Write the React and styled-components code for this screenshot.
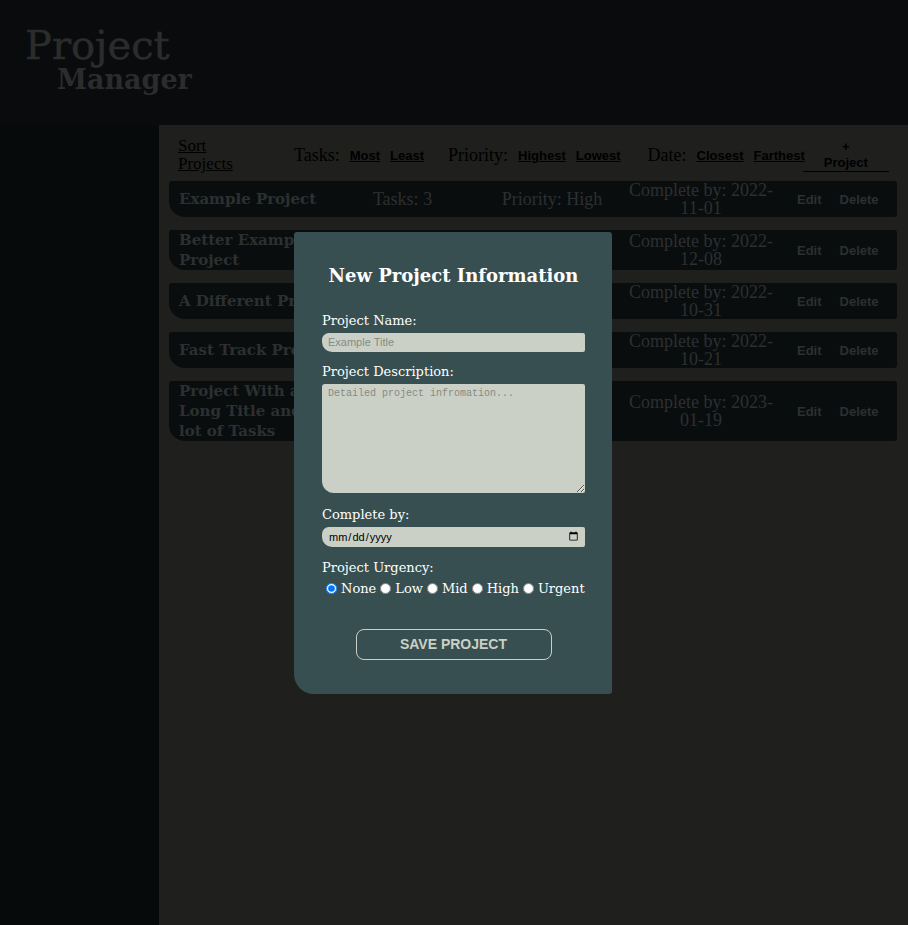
import styled, { createGlobalStyle } from "styled-components";

const GlobalStyle = createGlobalStyle`
  html, body {
    margin: 0;
    padding: 0;
    background: #1f1f1d;
  }
  * {
    box-sizing: border-box;
  }
`;

const Page = styled.div`
  display: flex;
  flex-direction: column;
  min-height: 100vh;
  font-family: "DejaVu Serif", serif;
`;

const Header = styled.header`
  height: 125px;
  background: #0a0b0c;
  padding: 23px 0 0 25px;
  color: #2b2c2c;
`;

const LogoTop = styled.div`
  font-size: 40px;
  line-height: 44px;
  -webkit-text-stroke: 0.5px #2b2c2c;
`;

const LogoBottom = styled.div`
  font-size: 27px;
  font-weight: bold;
  line-height: 26px;
  margin-left: 32px;
`;

const Body = styled.div`
  display: flex;
  flex: 1;
`;

const Sidebar = styled.aside`
  flex: 0 0 159px;
  background: #060a0b;
`;

const Main = styled.main`
  flex: 1;
  min-width: 0;
  background: #1f1f1d;
  padding: 12px 11px 0 10px;
`;

const SortBar = styled.div`
  display: flex;
  align-items: center;
  padding-left: 9px;
  height: 36px;
  margin-bottom: 8px;
  color: #000;
  font-family: "Liberation Serif", serif;
  font-size: 18px;
`;

const SortTitle = styled.div`
  flex: 0 0 116px;
  font-size: 17px;
  line-height: 18px;
  span {
    display: inline-block;
    width: 62px;
    text-decoration: underline;
  }
`;

const SortGroup = styled.div`
  display: flex;
  align-items: center;
  gap: 10px;
  margin-right: ${(p) => p.$gap ?? 26}px;
`;

const SortLink = styled.a`
  font-family: "Liberation Sans", Arial, sans-serif;
  font-weight: bold;
  font-size: 13px;
  color: #000;
  text-decoration: underline;
`;

const AddButton = styled.div`
  flex: 0 0 86px;
  margin-left: -2px;
  border-bottom: 1px solid #000;
  text-align: center;
  font-family: "Liberation Sans", Arial, sans-serif;
  font-weight: bold;
  font-size: 13px;
  line-height: 16px;
`;

const Card = styled.div`
  display: flex;
  align-items: center;
  background: #0a0d0e;
  border-radius: 3px 3px 3px 16px;
  padding-left: 10px;
  margin-bottom: 13px;
  color: #2c3031;
  min-height: 35px;
`;

const CardTitle = styled.div`
  flex: 0 0 160px;
  margin-right: 26px;
  font-weight: bold;
  font-size: 15px;
  line-height: 20px;
`;

const Field = styled.div`
  flex: 0 0 ${(p) => p.$w}px;
  margin-left: ${(p) => p.$ml || 0}px;
  text-align: center;
  font-family: "Liberation Serif", serif;
  font-size: 18px;
  line-height: 18px;
`;

const Action = styled.span`
  margin-left: ${(p) => p.$ml}px;
  font-family: "Liberation Sans", Arial, sans-serif;
  font-weight: bold;
  font-size: 13px;
`;

const Modal = styled.div`
  position: fixed;
  left: calc(50% - 160px);
  top: calc(50% - 231px);
  width: 318px;
  height: 462px;
  background: #384f51;
  border-radius: 3px 3px 3px 20px;
  padding: 31px 27px 0 28px;
  color: #fff;
`;

const ModalTitle = styled.h2`
  margin: 0 0 24px;
  text-align: center;
  font-size: 18px;
  line-height: 26px;
  font-weight: bold;
`;

const Label = styled.label`
  display: block;
  font-size: 13px;
  line-height: 16px;
  margin-bottom: 4px;
`;

const fieldBase = `
  display: block;
  width: 100%;
  border: none;
  background: #cbd0c6;
  font-family: "Liberation Sans", Arial, sans-serif;
  font-size: 11px;
  &::placeholder {
    color: #868a83;
  }
`;

const TextInput = styled.input`
  ${fieldBase}
  height: 19px;
  border-radius: 7px 2px 2px 10px;
  padding: 0 6px;
  margin: 0 0 12px;
`;

const TextArea = styled.textarea`
  ${fieldBase}
  height: 109px;
  border-radius: 3px 2px 2px 12px;
  padding: 4px 6px;
  margin: 0 0 14px;
  font-family: "Liberation Mono", monospace;
  font-size: 10px;
  resize: vertical;
`;

const DateInput = styled.input`
  ${fieldBase}
  height: 20px;
  border-radius: 7px 2px 2px 10px;
  padding: 0 4px 0 6px;
  margin: 0 0 13px;
  color: #000;
`;

const Radios = styled.div`
  display: flex;
  align-items: center;
  font-size: 13px;
  line-height: 18px;
  label {
    display: flex;
    align-items: center;
  }
  input {
    margin: 0 4px 0 4px;
    width: 11px;
    height: 11px;
  }
`;

const SaveButton = styled.button`
  display: block;
  width: 196px;
  height: 31px;
  margin: 31px auto 0;
  background: transparent;
  border: 1px solid #cbd0c6;
  border-radius: 8px;
  color: #cbd0c6;
  font-family: "Liberation Sans", Arial, sans-serif;
  font-weight: bold;
  font-size: 14px;
  text-transform: uppercase;
`;

const projects = [
  { title: "Example Project", tasks: 3, priority: "High", date: "2022-11-01" },
  { title: "Better Example Project", tasks: 5, priority: "Mid", date: "2022-12-08" },
  { title: "A Different Project", tasks: 2, priority: "Low", date: "2022-10-31" },
  { title: "Fast Track Project", tasks: 4, priority: "Urgent", date: "2022-10-21" },
  { title: "Project With a Long Title and a lot of Tasks", tasks: 12, priority: "None", date: "2023-01-19" },
];

const App = () => {
  return (
    <Page>
      <GlobalStyle />
      <Header>
        <LogoTop>Project</LogoTop>
        <LogoBottom>Manager</LogoBottom>
      </Header>
      <Body>
        <Sidebar />
        <Main>
          <SortBar>
            <SortTitle>
              <span>Sort Projects</span>
            </SortTitle>
            <SortGroup $gap={24}>
              Tasks:
              <SortLink>Most</SortLink>
              <SortLink>Least</SortLink>
            </SortGroup>
            <SortGroup $gap={27}>
              Priority:
              <SortLink>Highest</SortLink>
              <SortLink>Lowest</SortLink>
            </SortGroup>
            <SortGroup $gap={0}>
              Date:
              <SortLink>Closest</SortLink>
              <SortLink>Farthest</SortLink>
            </SortGroup>
            <AddButton>
              +<br />
              Project
            </AddButton>
          </SortBar>
          {projects.map((p) => (
            <Card key={p.title}>
              <CardTitle>{p.title}</CardTitle>
              <Field $w={75}>Tasks: {p.tasks}</Field>
              <Field $w={144} $ml={40}>
                Priority: {p.priority}
              </Field>
              <Field $w={150} $ml={2}>
                Complete by: {p.date}
              </Field>
              <Action $ml={21}>Edit</Action>
              <Action $ml={18}>Delete</Action>
            </Card>
          ))}
        </Main>
      </Body>
      <Modal>
        <ModalTitle>New Project Information</ModalTitle>
        <Label>Project Name:</Label>
        <TextInput type="text" placeholder="Example Title" />
        <Label>Project Description:</Label>
        <TextArea placeholder="Detailed project infromation..." />
        <Label>Complete by:</Label>
        <DateInput type="date" />
        <Label>Project Urgency:</Label>
        <Radios>
          {["None", "Low", "Mid", "High", "Urgent"].map((u) => (
            <label key={u}>
              <input type="radio" name="urgency" defaultChecked={u === "None"} />
              {u}
            </label>
          ))}
        </Radios>
        <SaveButton>Save Project</SaveButton>
      </Modal>
    </Page>
  );
};

export default App;
